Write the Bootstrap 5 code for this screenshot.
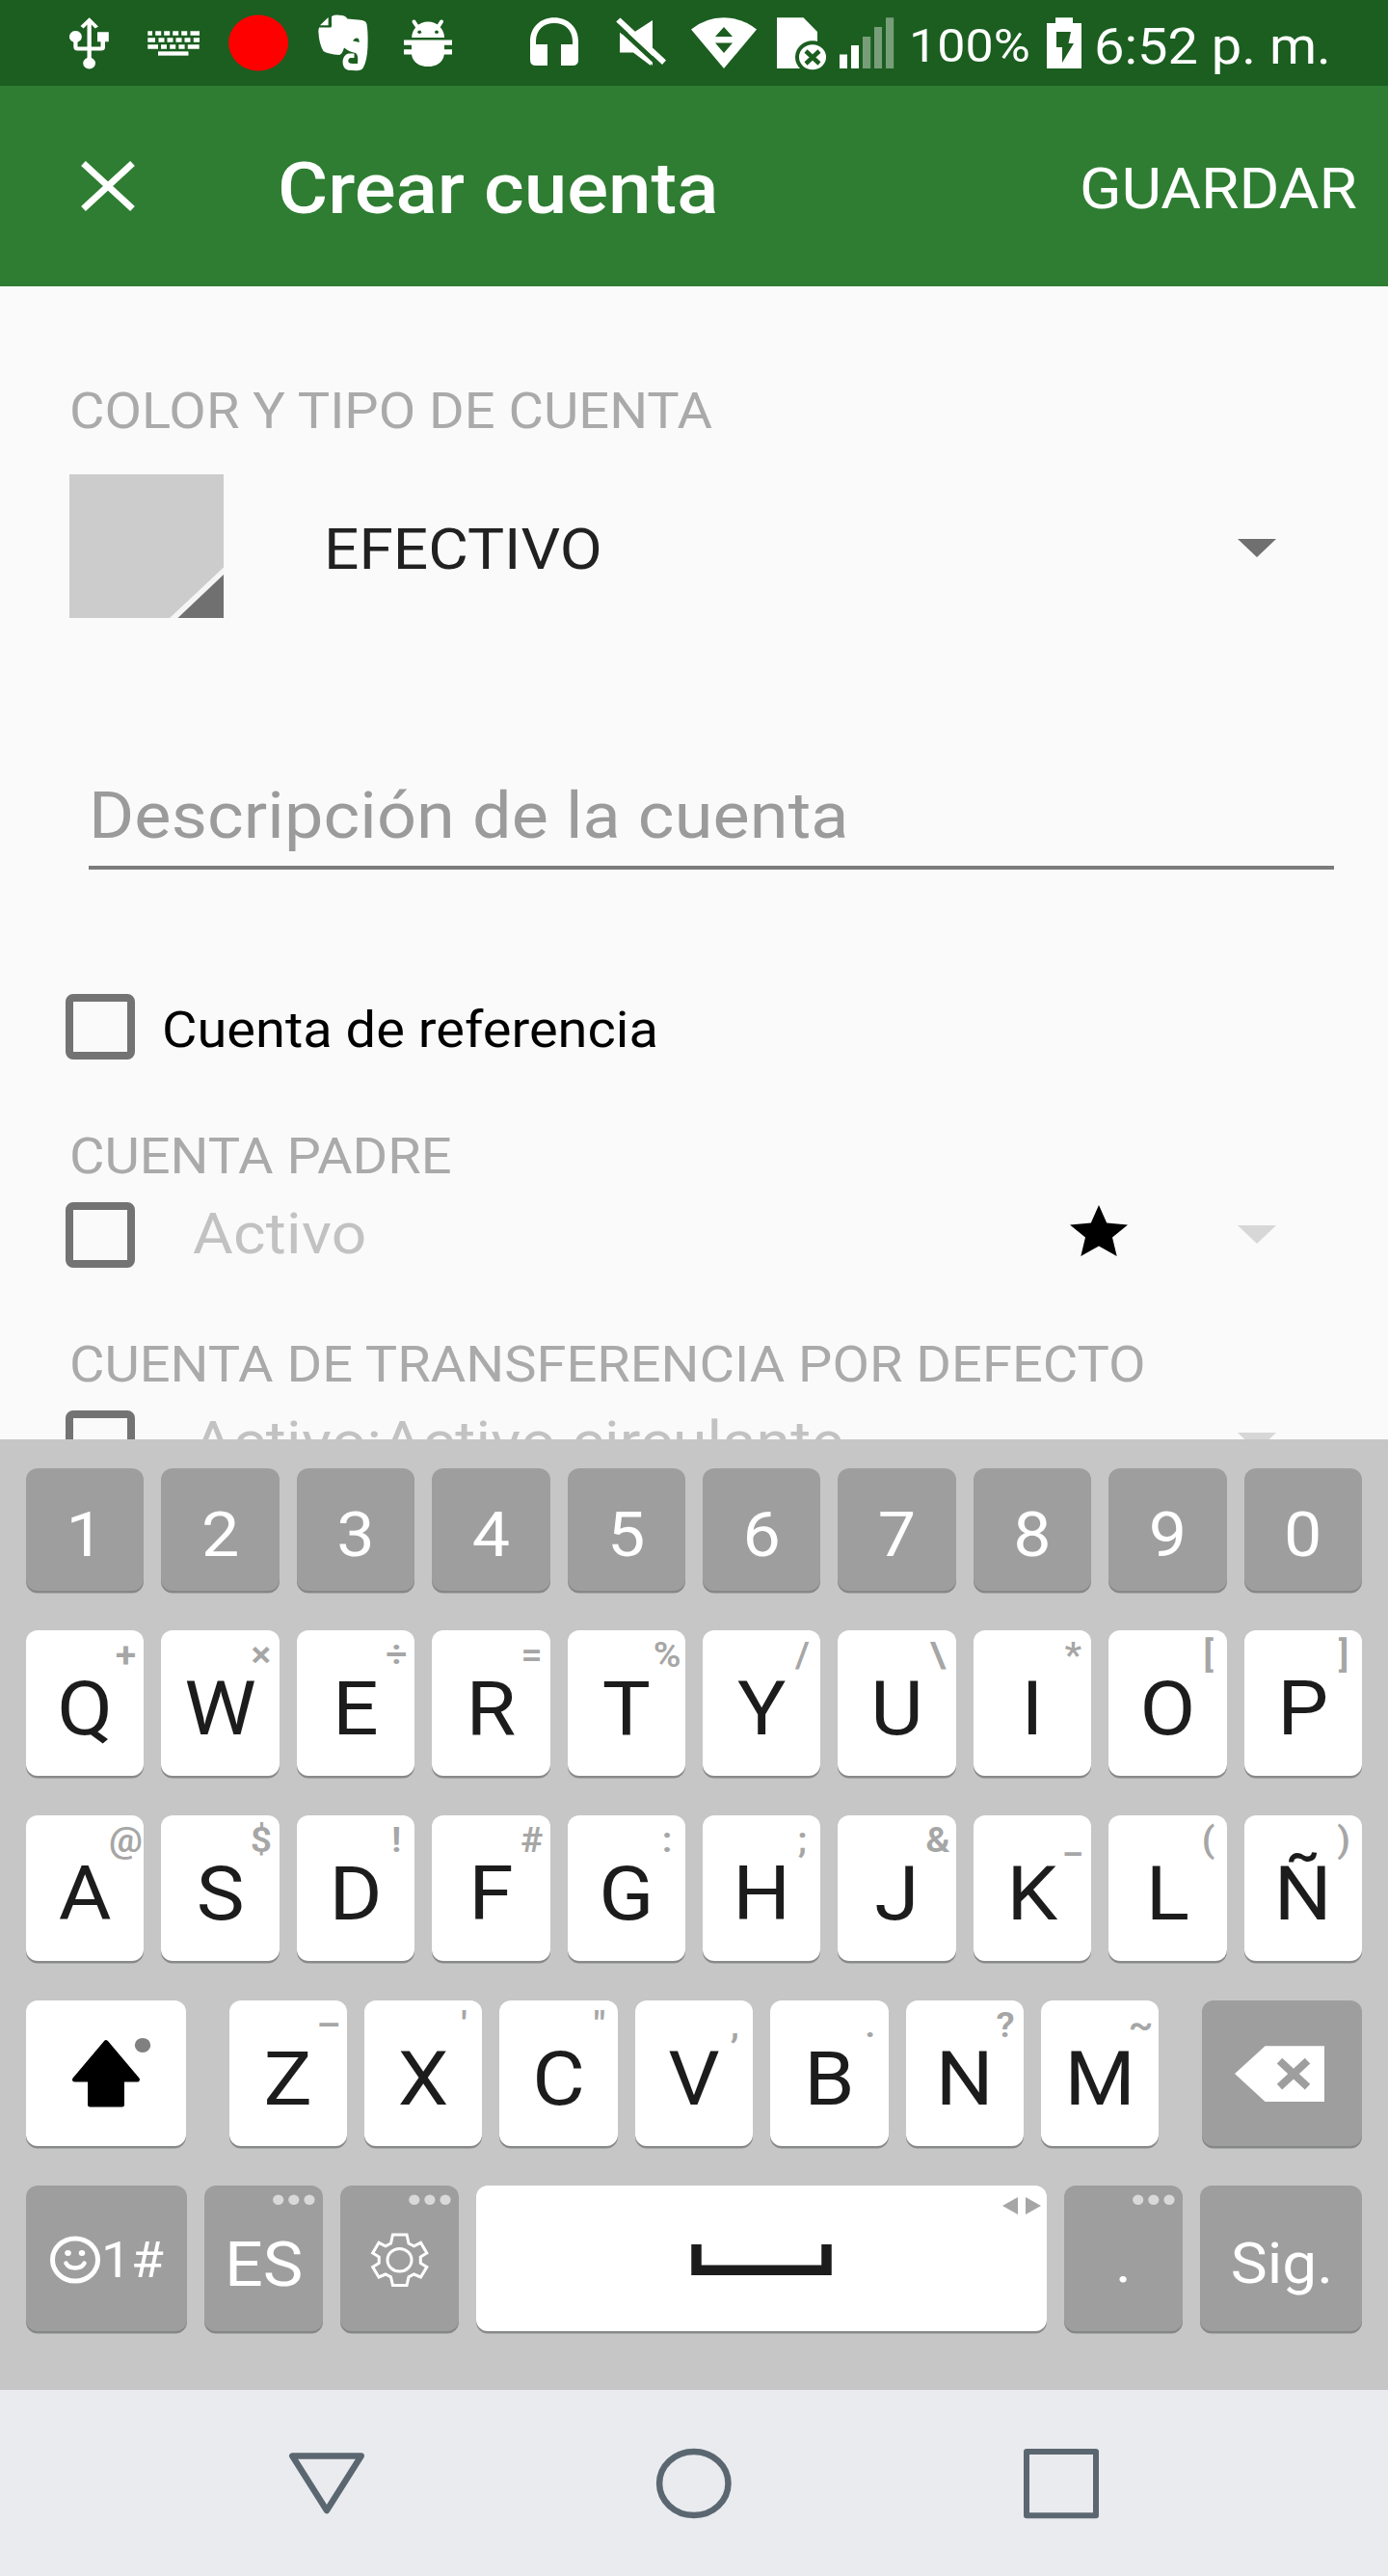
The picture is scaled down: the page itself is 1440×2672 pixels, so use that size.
<!DOCTYPE html>
<html lang="es">
<head>
<meta charset="utf-8">
<meta name="viewport" content="width=device-width, initial-scale=1">
<title>Crear cuenta</title>
<link rel="stylesheet" href="https://cdn.jsdelivr.net/npm/bootstrap@5.3.0/dist/css/bootstrap.min.css">
<style>
body{font-family:Roboto,"Liberation Sans",sans-serif;width:1440px;height:2672px;background:#fafafa;overflow:hidden}
svg{display:block;flex:none}
/* slightly squat lettering, scaled about the baseline */
.tx{display:block;white-space:nowrap;line-height:1;transform:scaleY(.928);transform-origin:50% 84.18%;flex:none}
.statusbar{height:89px;background:#1b5e20;color:#fff}
.appbar{height:208px;background:#2e7d32;color:#fff}
.appbar .title{font-size:80px;font-weight:500;margin:65px 0 0 147px}
.appbar .save{font-size:64px;margin:74px 32px 0 auto}
.form-pane{height:1195.5px;overflow:hidden}
.caption{font-size:56px;color:#aaa;margin-left:72px}
.choice{margin-left:68px}
.choice .form-check-input{width:72px;height:67.5px;margin:0;border:8px solid #737373;border-radius:8px;background:transparent;flex:none;opacity:1}
.kind{height:149px;margin:39px 0 0 72px}
.kind .tx{font-size:64px;color:#212121;margin:45px 0 0 104px}
.descr{margin:167px 56px 0 92px;height:94px;border-bottom:4.5px solid #7b7b7b;color:#9b9b9b}
.descr .tx{font-size:72px;letter-spacing:.12px}
.dim{font-size:64px;color:#c2c2c2;margin-left:60px;letter-spacing:.3px}
.keyboard{height:986px;background:#c6c6c6;padding:30px 27px 0}
.keys{height:192.1px}
.keys-num{height:168.5px}
.key{width:122.4px;height:150.5px;border-radius:12px;background:#fff;color:#1c1c1c;box-shadow:0 2.5px 0 #888a89;position:relative;flex:none;text-align:center;padding-top:38px}
.key .tx{font-size:84px}
.key .hint{position:absolute;left:73.5px;top:5.5px;width:60px;font-size:39px;font-weight:600;color:#a6a6a6}
.keys-num .key{height:127.5px;padding-top:32px}
.dark{background:#9e9e9e;color:#fff;box-shadow:0 2.5px 0 #868887}
.key.dark .tx{font-size:70px}
.pic{padding:0}
.wide{width:166px}
.key.dark .tx.sm{font-size:55px}
.key.dark .tx.md{font-size:64px}
.navbuttons{height:193.5px;background:#e9ebef}
</style>
</head>
<body class="d-flex flex-column">

<header class="statusbar d-flex flex-shrink-0">
  <svg style="margin-left:60px" width="420" height="89" viewBox="60 0 420 89" fill="#fff">
    <g><path d="M92.700 18.300L102 27.500 98.800 29.500 94.800 25.500V48.500H104.500V43.300H101V33.300H112.800V43.300H109V49Q109 52.500 105 52.500H94.800V60Q99 62 99 65.500A6.300 6.000 0 0 1 86.200 65.500Q86.200 62 90.500 60V52.500H80.500Q76.300 52.500 76.300 48.500V43.800A6.500 6.000 0 1 1 80.500 43.800V48.500H90.500V25.500L86.600 29.500 83.500 27z"/></g>
    <g fill="none" stroke="#fff">
      <path stroke-width="4.300" d="M153.300 34.500h4.700m3.200 0h6m3 0h6m3 0h6m3 0h6m3.300 0h9.500"/>
      <path stroke-width="4.700" d="M153.300 41.500h7.700m3.500 0h6m3 0h6m3 0h6m3 0h6m3.300 0h6.200"/>
      <path stroke-width="4.500" d="M153.300 48.500h10.700m3 0h6m3.200 0h6m3.200 0h6.200m3.200 0h11.900"/>
      <path stroke-width="4.300" d="M164 55.500h31.500"/>
    </g>
    <ellipse cx="268.100" cy="44.500" rx="31" ry="29" fill="red"/>
    <path d="M331 28.500H342.500Q344 28.500 344 27V17Q347 15.200 352 15.700 359 16 360.300 19.500L374 20.700Q379.500 21 380.500 25 382 34 381.500 48 381 62 377 70 375 73.300 370 73.300L361 72.800Q355.500 71 355.500 64 356 57 361.500 55.500H367.500V60H363.500Q360.500 61 361.500 64.500 363 66.500 371 66 372 57 369 55 363 54.200 357 49.500 355 56.500 352 57 340 56 335.500 53 331 46 330.300 32z"/>
    <path d="M332 26.300L340.600 18V26.300z"/>
    <path fill="#1b5e20" d="M366 42.500Q368 39 370.500 39.600 373 40 372.600 44 369 42.500 366 42.500z"/>
    <path d="M427.200 39A16.800 16.300 0 0 1 461 39z"/>
    <path d="M429.500 22.500l4.500 7m24-7l-4.500 7" fill="none" stroke="#fff" stroke-width="4" stroke-linecap="round"/>
    <g fill="#1b5e20"><ellipse cx="435.200" cy="33.300" rx="2" ry="1.800"/><ellipse cx="453" cy="33.300" rx="2" ry="1.800"/></g>
    <path d="M419 41.500h50v5.200h-8v4.500h8v5.200h-8.200C460 65 452 69 444 69S428 65 427 56.400h-8v-5.200h8v-4.500h-8z"/>
  </svg>
  <svg style="margin-left:60px" width="390" height="89" viewBox="540 0 390 89" fill="#fff">
    <path d="M550 43C550 28 561 18.300 575 18.300S600 28 600 43V62Q600 68 594 68H582V46H594V43C594 31 586 24 575 24S556 31 556 43V46H568V68H556Q550 68 550 62z"/>
    <path d="M643 33.500L675 64V68L657 54.500H643zM658.500 33L677 21V68L643 36z"/>
    <path d="M638 25L688 71.500" stroke="#1b5e20" stroke-width="5"/>
    <path d="M643.500 18.500L691 62.500 687 67 639.200 22.500z"/>
    <path d="M717 30.500Q732 18.300 751 18.300T785 30.500L751 71z"/>
    <path fill="#1b5e20" d="M742 38L751 28 760 38zM742 44.500H760L751 55z"/>
    <path d="M806 18.300H833.500L848 33V71H806z"/>
    <ellipse cx="843" cy="59.300" rx="18" ry="17" fill="#1b5e20"/>
    <ellipse cx="843" cy="59.300" rx="14" ry="13"/>
    <path d="M836 53L850 66M850 53L836 66" stroke="#1b5e20" stroke-width="4.500"/>
    <path d="M871 56.500h8V71h-8zM883 47h8V71h-8z"/>
    <path fill="#779e79" d="M895 38h8.200V71H895zM907 28h8V71h-8zM919 18.300h8.200V71H919z"/>
  </svg>
  <span class="tx" style="font-size:52px;margin:19.500px 0 0 13px;width:126px">100%</span>
  <svg style="margin-left:17px" width="37" height="89" viewBox="1086 0 37 89" fill="#fff">
    <path d="M1095 18.300h18V24h9V71h-36V24h9z"/>
    <path fill="#1b5e20" d="M1096 33h15l-2.500 12h5.500L1102 65V49h-6z"/>
  </svg>
  <span class="tx" style="font-size:56px;margin:18px 0 0 12px">6:52 p. m.</span>
</header>

<div class="appbar d-flex align-items-start flex-shrink-0">
  <svg style="margin:76px 0 0 83px" width="58" height="56" viewBox="83 165 58 56"><path d="M86.500 169.500L137.500 216.500M137.500 169.500L86.500 216.500" stroke="#fff" stroke-width="7"/></svg>
  <h1 class="tx title">Crear cuenta</h1>
  <span class="tx save">GUARDAR</span>
</div>

<main class="form-pane flex-shrink-0">
  <div class="d-flex" style="padding-top:100px"><span class="tx caption">COLOR Y TIPO DE CUENTA</span></div>
  <div class="kind d-flex align-items-start">
    <svg width="160" height="149" viewBox="72 492 160 149"><path fill="#ccc" d="M72 492h160v149H72z"/><path fill="#f5f5f5" d="M176 641L232 588.500V641z"/><path fill="#707070" d="M184.500 641L232 596V641z"/></svg>
    <span class="tx">EFECTIVO</span>
    <svg class="ms-auto" style="margin:67px 116px 0 0" width="40" height="19" viewBox="0 0 40 19"><path fill="#707070" d="M0 0h40L20 19z"/></svg>
  </div>
  <div class="descr d-flex"><span class="tx">Descripción de la cuenta</span></div>
  <div class="choice d-flex align-items-start" style="margin-top:129px">
    <input class="form-check-input" type="checkbox" aria-label="Cuenta de referencia">
    <span class="tx text-black" style="font-size:56px;margin:8px 0 0 28px">Cuenta de referencia</span>
  </div>
  <div class="d-flex" style="padding-top:71px"><span class="tx caption">CUENTA PADRE</span></div>
  <div class="choice d-flex align-items-start" style="margin-top:21.500px">
    <input class="form-check-input" type="checkbox" aria-label="Activo">
    <span class="tx dim">Activo</span>
    <svg class="ms-auto" style="margin-top:3px" width="60" height="53" viewBox="0 0 60 53"><path d="M30 0l8.200 18.500L60 20.500 44 33.500 48.700 53 30 42.500 11.300 53 16 33.500 0 20.500l21.800-2z"/></svg>
    <svg style="margin:23.500px 116px 0 114px" width="40" height="19" viewBox="0 0 40 19"><path fill="#d7d7d7" d="M0 0h40L20 19z"/></svg>
  </div>
  <div class="d-flex" style="padding-top:71.500px"><span class="tx caption">CUENTA DE TRANSFERENCIA POR DEFECTO</span></div>
  <div class="choice d-flex align-items-start" style="margin-top:21px">
    <input class="form-check-input" type="checkbox" aria-label="Activo circulante">
    <span class="tx dim">Activo:Activo circulante</span>
    <svg class="ms-auto" style="margin:23px 116px 0 0" width="40" height="19" viewBox="0 0 40 19"><path fill="#d7d7d7" d="M0 0h40L20 19z"/></svg>
  </div>
</main>

<section class="keyboard flex-shrink-0">
  <div class="keys-num d-flex justify-content-between">
    <div class="key dark"><span class="tx">1</span></div><div class="key dark"><span class="tx">2</span></div><div class="key dark"><span class="tx">3</span></div><div class="key dark"><span class="tx">4</span></div><div class="key dark"><span class="tx">5</span></div><div class="key dark"><span class="tx">6</span></div><div class="key dark"><span class="tx">7</span></div><div class="key dark"><span class="tx">8</span></div><div class="key dark"><span class="tx">9</span></div><div class="key dark"><span class="tx">0</span></div>
  </div>
  <div class="keys d-flex justify-content-between">
    <div class="key"><span class="tx">Q</span><span class="tx hint">+</span></div>
    <div class="key"><span class="tx">W</span><span class="tx hint">×</span></div>
    <div class="key"><span class="tx">E</span><span class="tx hint">÷</span></div>
    <div class="key"><span class="tx">R</span><span class="tx hint">=</span></div>
    <div class="key"><span class="tx">T</span><span class="tx hint">%</span></div>
    <div class="key"><span class="tx">Y</span><span class="tx hint">/</span></div>
    <div class="key"><span class="tx">U</span><span class="tx hint">\</span></div>
    <div class="key"><span class="tx">I</span><span class="tx hint">*</span></div>
    <div class="key"><span class="tx">O</span><span class="tx hint">[</span></div>
    <div class="key"><span class="tx">P</span><span class="tx hint">]</span></div>
  </div>
  <div class="keys d-flex justify-content-between">
    <div class="key"><span class="tx">A</span><span class="tx hint">@</span></div>
    <div class="key"><span class="tx">S</span><span class="tx hint">$</span></div>
    <div class="key"><span class="tx">D</span><span class="tx hint">!</span></div>
    <div class="key"><span class="tx">F</span><span class="tx hint">#</span></div>
    <div class="key"><span class="tx">G</span><span class="tx hint">:</span></div>
    <div class="key"><span class="tx">H</span><span class="tx hint">;</span></div>
    <div class="key"><span class="tx">J</span><span class="tx hint">&amp;</span></div>
    <div class="key"><span class="tx">K</span><span class="tx hint">_</span></div>
    <div class="key"><span class="tx">L</span><span class="tx hint">(</span></div>
    <div class="key"><span class="tx">Ñ</span><span class="tx hint">)</span></div>
  </div>
  <div class="keys d-flex justify-content-between">
    <div class="key wide pic">
      <svg width="166" height="150" viewBox="27 2075.400 166 150"><path stroke="#000" stroke-width="5" stroke-linejoin="round" d="M110 2119L142.500 2157.500H126.500V2183.500H93.500V2157.500H77.500z"/><ellipse cx="148" cy="2121.800" rx="8.200" ry="7.500" fill="#808080"/></svg>
    </div>
    <div class="d-flex justify-content-between" style="width:965px">
      <div class="key"><span class="tx">Z</span><span class="tx hint">–</span></div>
      <div class="key"><span class="tx">X</span><span class="tx hint">'</span></div>
      <div class="key"><span class="tx">C</span><span class="tx hint">"</span></div>
      <div class="key"><span class="tx">V</span><span class="tx hint">,</span></div>
      <div class="key"><span class="tx">B</span><span class="tx hint">.</span></div>
      <div class="key"><span class="tx">N</span><span class="tx hint">?</span></div>
      <div class="key"><span class="tx">M</span><span class="tx hint">~</span></div>
    </div>
    <div class="key dark wide pic">
      <svg width="166" height="150" viewBox="1247 2075.400 166 150"><path fill="#fff" d="M1281 2151.500L1312.500 2122.600H1374V2180.500H1312.500z"/><path stroke="#9e9e9e" stroke-width="8" d="M1327.500 2138L1356.500 2165M1356.500 2138L1327.500 2165"/></svg>
    </div>
  </div>
  <div class="keys d-flex justify-content-between">
    <div class="key dark pic d-flex align-items-start" style="width:167px">
      <svg width="78" height="150" viewBox="27 2267.500 78 150" fill="#fff"><ellipse cx="78" cy="2344.500" rx="23.500" ry="22" fill="none" stroke="#fff" stroke-width="5"/><ellipse cx="70.500" cy="2337.500" rx="3.300" ry="3"/><ellipse cx="85" cy="2337.500" rx="3.300" ry="3"/><path d="M68.500 2348Q71 2353 78 2353T87.500 2348" fill="none" stroke="#fff" stroke-width="4.500" stroke-linecap="round"/></svg>
      <span class="tx sm" style="margin-top:48.500px">1#</span>
    </div>
    <div class="key dark" style="padding-top:44.500px"><span class="tx">ES</span>
      <svg class="position-absolute end-0 top-0" width="60" height="24" viewBox="275 2267.500 60 24" fill="#d9d9d9"><ellipse cx="288.700" cy="2282.300" rx="5.600" ry="5.300"/><ellipse cx="304.800" cy="2282.300" rx="5.600" ry="5.300"/><ellipse cx="321" cy="2282.300" rx="5.600" ry="5.300"/></svg>
    </div>
    <div class="key dark pic">
      <svg width="122" height="150" viewBox="353 2267.500 122 150" fill="none" stroke="#fff" stroke-width="3"><path d="M407.500 2318.500H422L424 2327.500 429.500 2330.300 436.500 2326.800 442.800 2337.500 436.300 2341.500V2348L442.800 2352 436.500 2362.500 429.500 2359.500 424 2362.300 422 2371H407.500L405.500 2362.300 400 2359.500 393 2362.500 386.700 2352 393.200 2348V2341.500L386.700 2337.500 393 2326.800 400 2330.300 405.500 2327.500z"/><ellipse cx="414.500" cy="2344.800" rx="12.500" ry="11.800"/><g fill="#d9d9d9" stroke="none"><ellipse cx="429.800" cy="2282.300" rx="5.600" ry="5.300"/><ellipse cx="445.900" cy="2282.300" rx="5.600" ry="5.300"/><ellipse cx="462" cy="2282.300" rx="5.600" ry="5.300"/></g></svg>
    </div>
    <div class="key pic" style="width:592px">
      <svg width="592" height="150" viewBox="494 2267.500 592 150"><path d="M722.500 2328.500V2355.200H857.500V2328.500" fill="none" stroke="#1c1c1c" stroke-width="10.500"/><path fill="#a6a6a6" d="M1040 2288.500L1056 2279.500V2297.500zM1080 2288.500L1064 2279.500V2297.500z"/></svg>
    </div>
    <div class="key dark" style="padding-top:47px"><span class="tx md">.</span>
      <svg class="position-absolute end-0 top-0" width="60" height="24" viewBox="275 2267.500 60 24" fill="#d9d9d9"><ellipse cx="288.700" cy="2282.300" rx="5.600" ry="5.300"/><ellipse cx="304.800" cy="2282.300" rx="5.600" ry="5.300"/><ellipse cx="321" cy="2282.300" rx="5.600" ry="5.300"/></svg>
    </div>
    <div class="key dark" style="width:168px;padding:47.500px 0 0 2px"><span class="tx md">Sig.</span></div>
  </div>
</section>

<nav class="navbuttons d-flex flex-shrink-0">
  <svg style="margin:59px 0 0 298px" width="82" height="76" viewBox="298 2537.500 82 76" fill="none" stroke="#5b6770" stroke-width="6.500" stroke-linejoin="round"><path d="M303.300 2547H374.700L339 2603.500z"/></svg>
  <svg style="margin:59px 0 0 299px" width="82" height="76" viewBox="679 2537.500 82 76" fill="none" stroke="#5b6770" stroke-width="6.500"><ellipse cx="719.800" cy="2575.500" rx="35.700" ry="33"/></svg>
  <svg style="margin:59px 0 0 299px" width="82" height="76" viewBox="1060 2537.500 82 76" fill="none" stroke="#5b6770" stroke-width="6" stroke-linejoin="round"><path d="M1065 2542.500H1137V2608.700H1065z"/></svg>
</nav>

<script src="https://cdn.jsdelivr.net/npm/bootstrap@5.3.0/dist/js/bootstrap.bundle.min.js"></script>
</body>
</html>
